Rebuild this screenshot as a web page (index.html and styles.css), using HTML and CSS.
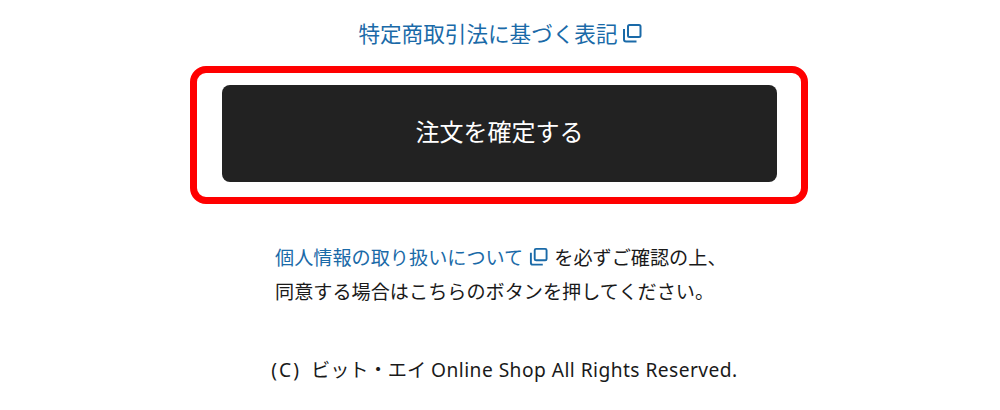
FILE: index.html
```html
<!DOCTYPE html>
<html lang="ja">
<head>
<meta charset="utf-8">
<title>注文を確定する</title>
<link rel="stylesheet" href="styles.css">
</head>
<body>
<main class="page">
  <p class="law"><a class="link" href="#">特定商取引法に基づく表記<svg class="ext ext-lg" viewBox="0 0 20 20"><rect x="6" y="2" width="12.5" height="12" rx="1.5"/><path d="M2 6v10.500a2 2 0 0 0 2 2h10.500"/></svg></a></p>
  <div class="frame">
    <button class="confirm" type="button">注文を確定する</button>
  </div>
  <div class="notice">
    <p class="line"><a class="link" href="#">個人情報の取り扱いについて<svg class="ext" viewBox="0 0 20 20"><rect x="6" y="2" width="12.500" height="12" rx="1.500"/><path d="M2 6v10.500a2 2 0 0 0 2 2h10.500"/></svg></a><span class="after">を必ずご確認の上、</span></p>
    <p class="line">同意する場合はこちらのボタンを押してください。</p>
  </div>
  <p class="copy"><span class="mark">(C)</span>ビット・エイ <span class="latin">Online Shop All Rights Reserved.</span></p>
</main>
</body>
</html>
```
FILE: styles.css
```css
* { box-sizing: border-box; }
html, body { margin: 0; padding: 0; background: #fff; }
body {
  width: 1000px;
  height: 410px;
  overflow: hidden;
  font-family: "Noto Sans CJK JP", "Noto Sans", sans-serif;
  color: #1a1a1a;
}
.page {
  display: flex;
  flex-direction: column;
  align-items: center;
  padding-top: 17px;
}
.law {
  margin: 0;
  height: 32px;
  font-size: 21.6px;
  line-height: 32px;
  white-space: nowrap;
}
.link { color: #1a6aa8; text-decoration: none; }
.ext {
  width: 19px;
  height: 19px;
  margin-left: 6px;
  vertical-align: -1px;
  fill: none;
  stroke: #1a6aa8;
  stroke-width: 2;
}
.ext-lg { width: 20px; height: 20px; margin-left: 4px; }
.frame {
  margin-top: 17px;
  margin-left: -2px;
  width: 618px;
  height: 138px;
  border: 7px solid #ff0000;
  border-radius: 16px;
  padding: 12px 24px 15px 25px;
}
.confirm {
  display: block;
  width: 100%;
  height: 97px;
  border: 0;
  border-radius: 8px;
  padding: 0 0 7px;
  background: #222;
  color: #fff;
  font-family: inherit;
  font-size: 24px;
}
.notice {
  margin-top: 36px;
  width: 450px;
  font-size: 19.150px;
  line-height: 34px;
}
.line { margin: 0; white-space: nowrap; }
.after { margin-left: 6px; }
.copy {
  margin: 45px 0 0 9px;
  font-family: "Noto Sans", "Noto Sans CJK JP", sans-serif;
  font-size: 19.200px;
  line-height: 34px;
  white-space: nowrap;
}
.mark { margin-right: 10px; letter-spacing: 2px; }
.latin { letter-spacing: 0.45px; }
```
